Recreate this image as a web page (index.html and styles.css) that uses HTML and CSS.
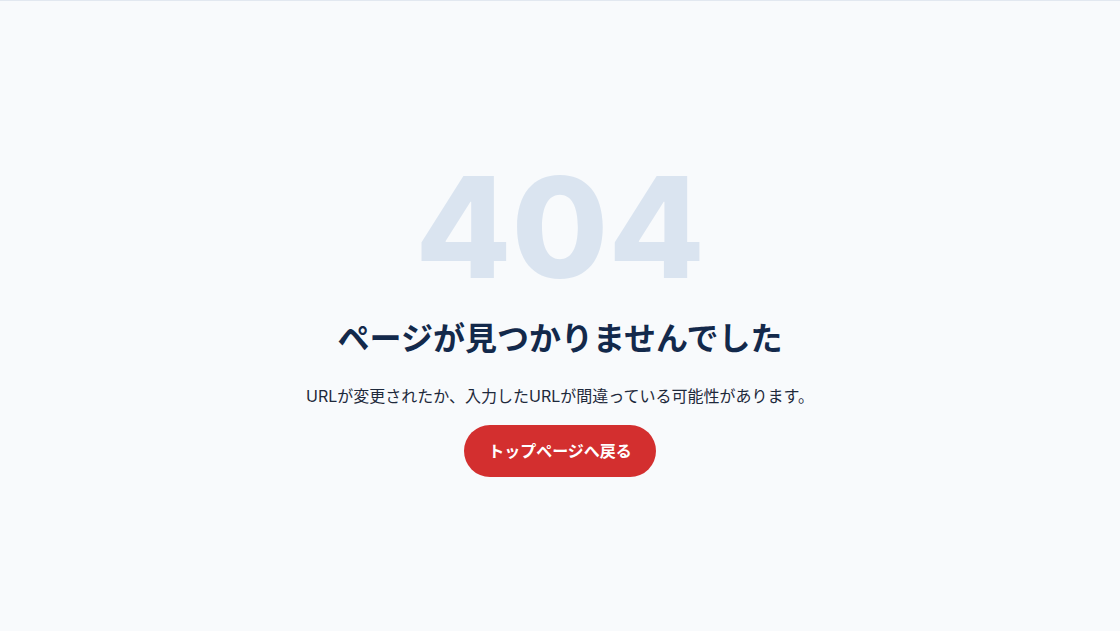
FILE: index.html
```html
<!DOCTYPE html>
<html lang="ja">
  <head>
    <meta charset="UTF-8" />
    <meta name="viewport" content="width=device-width, initial-scale=1.0" />
    <link rel="stylesheet" href="styles.css">
    <title>404 | ページが見つかりませんでした</title>
  </head>
  <body>
    <main class="not-found">
      <div class="not-found-code">404</div>
      <h1 class="not-found-title">ページが見つかりませんでした</h1>
      <p class="not-found-text">URLが変更されたか、入力したURLが間違っている可能性があります。</p>
      <a class="home-button" href="/">トップページへ戻る</a>
    </main>
  </body>
</html>
```

FILE: styles.css
```css
*,
*::after,
*::before {
  box-sizing: border-box;
}

body {
  margin: 0;
  background-color: #f8fafc;
  border-top: 1px solid #e2e8f0;
  font-family: Inter, "Noto Sans CJK JP", sans-serif;
  color: #1e293b;
}

.not-found {
  min-height: calc(100vh - 1px);
  display: flex;
  flex-direction: column;
  align-items: center;
  justify-content: center;
  text-align: center;
  padding: 2px 16px 0;
}

.not-found-code {
  font-size: 140px;
  font-weight: 800;
  line-height: 1;
  color: #dae4f0;
}

.not-found-title {
  margin: 20px 0 0;
  font-size: 32px;
  font-weight: 700;
  line-height: 1.4;
  color: #13294b;
}

.not-found-text {
  margin: 22px 0 0;
  font-size: 16px;
  line-height: 1.6;
  color: #1e293b;
}

.home-button {
  margin-top: 16px;
  display: inline-block;
  padding: 14px 24px;
  border-radius: 999px;
  background-color: #d32f2f;
  color: #fff;
  font-size: 16px;
  font-weight: 700;
  line-height: 24px;
  text-decoration: none;
}
```
